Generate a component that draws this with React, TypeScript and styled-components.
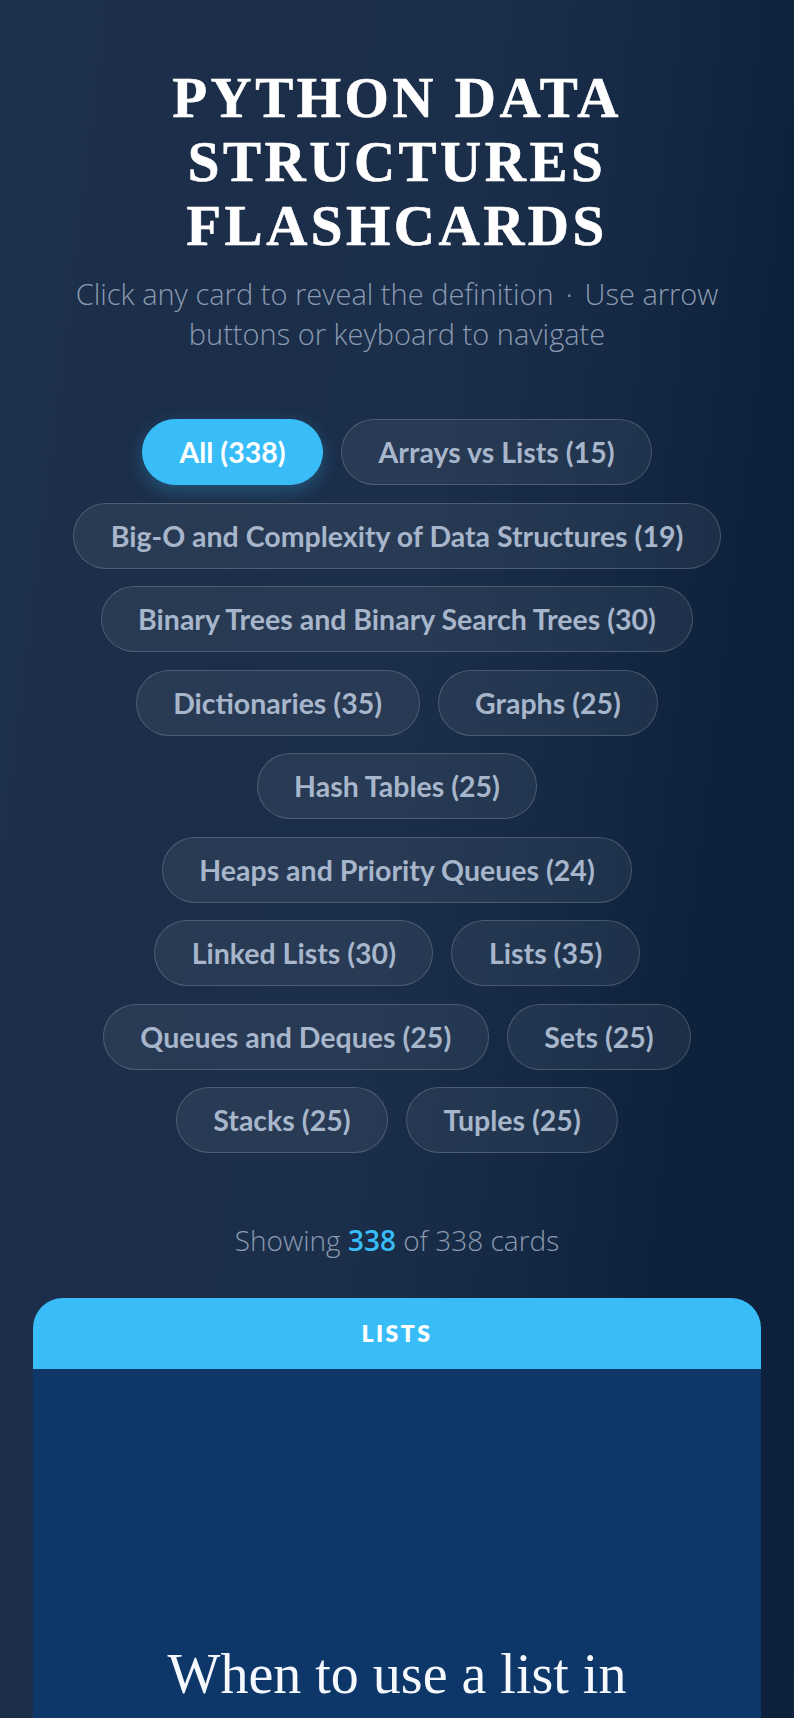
import React, { useState } from "react";
import styled, { createGlobalStyle, css } from "styled-components";

const GlobalStyle = createGlobalStyle`
  html, body {
    margin: 0;
    padding: 0;
  }
  body {
    min-height: 100vh;
    font-family: "Open Sans", "Noto Sans", sans-serif;
    background: linear-gradient(
      97deg,
      #1e3250 0%,
      #1c2e49 15%,
      #1b2e4a 48%,
      #152944 66%,
      #0c203a 84%,
      #0e223e 100%
    ) fixed;
    color: #ffffff;
  }
`;

const Page = styled.main`
  display: flex;
  flex-direction: column;
  align-items: center;
  padding: 66px 33px 0;
  box-sizing: border-box;
  width: 100%;
`;

const Title = styled.h1`
  margin: 0;
  font-family: "Liberation Serif", "Times New Roman", serif;
  font-weight: 700;
  font-size: 57px;
  line-height: 64px;
  letter-spacing: 3.5px;
  -webkit-text-stroke: 0.6px #ffffff;
  color: #ffffff;
  text-align: center;
`;

const Subtitle = styled.p`
  margin: 16px 0 0;
  max-width: 700px;
  font-family: "Open Sans", "Noto Sans", sans-serif;
  font-weight: 300;
  font-size: 29px;
  line-height: 40px;
  color: #8a9ab1;
  text-align: center;
`;

const Dot = styled.span`
  margin: 0 12px;
`;

const FilterBar = styled.nav`
  display: flex;
  flex-wrap: wrap;
  justify-content: center;
  gap: 17.5px 18px;
  margin-top: 65px;
  width: 100%;
`;

const Pill = styled.button<{ $active?: boolean }>`
  box-sizing: border-box;
  height: 66px;
  padding: 0 36.5px;
  border-radius: 33px;
  border: 1.5px solid rgba(255, 255, 255, 0.18);
  background: rgba(255, 255, 255, 0.06);
  font-family: "Lato", "Noto Sans", sans-serif;
  font-weight: 700;
  font-size: 28.5px;
  line-height: 42px;
  color: #a7b6cb;
  cursor: pointer;
  white-space: nowrap;

  ${(p) =>
    p.$active &&
    css`
      background: #38bdf8;
      border-color: #38bdf8;
      color: #ffffff;
      box-shadow: 0 6px 18px rgba(56, 189, 248, 0.28);
    `}
`;

const Count = styled.p`
  margin: 68px 0 0;
  font-family: "Open Sans", "Noto Sans", sans-serif;
  font-weight: 300;
  font-size: 28px;
  line-height: 39px;
  color: #8a9ab1;
  text-align: center;
`;

const CountNumber = styled.strong`
  font-weight: 600;
  color: #38bdf8;
`;

const Card = styled.article`
  margin-top: 38px;
  width: 100%;
  border-radius: 30px 30px 0 0;
  overflow: hidden;
`;

const CardHeader = styled.header`
  background: #38bdf8;
  padding: 20px;
  font-family: "Lato", "Noto Sans", sans-serif;
  font-weight: 800;
  font-size: 23px;
  line-height: 31px;
  letter-spacing: 2.5px;
  color: #ffffff;
  text-align: center;
`;

const CardBody = styled.div`
  background: #0d3769;
  min-height: 680px;
  display: flex;
  align-items: center;
  justify-content: center;
  padding: 0 60px;
`;

const CardText = styled.h2`
  margin: 0;
  font-family: "Liberation Serif", "Times New Roman", serif;
  font-weight: 400;
  font-size: 56px;
  line-height: 70px;
  color: #f5f8fc;
  text-align: center;
`;

const categories: { name: string; count: number }[] = [
  { name: "All", count: 338 },
  { name: "Arrays vs Lists", count: 15 },
  { name: "Big-O and Complexity of Data Structures", count: 19 },
  { name: "Binary Trees and Binary Search Trees", count: 30 },
  { name: "Dictionaries", count: 35 },
  { name: "Graphs", count: 25 },
  { name: "Hash Tables", count: 25 },
  { name: "Heaps and Priority Queues", count: 24 },
  { name: "Linked Lists", count: 30 },
  { name: "Lists", count: 35 },
  { name: "Queues and Deques", count: 25 },
  { name: "Sets", count: 25 },
  { name: "Stacks", count: 25 },
  { name: "Tuples", count: 25 },
];

export default function App() {
  const [active, setActive] = useState("All");
  return (
    <>
      <GlobalStyle />
      <Page>
        <Title>PYTHON DATA STRUCTURES FLASHCARDS</Title>
        <Subtitle>
          Click any card to reveal the definition<Dot>·</Dot>Use arrow buttons
          or keyboard to navigate
        </Subtitle>
        <FilterBar>
          {categories.map((c) => (
            <Pill
              key={c.name}
              $active={active === c.name}
              onClick={() => setActive(c.name)}
            >
              {c.name} ({c.count})
            </Pill>
          ))}
        </FilterBar>
        <Count>
          Showing <CountNumber>338</CountNumber> of 338 cards
        </Count>
        <Card>
          <CardHeader>LISTS</CardHeader>
          <CardBody>
            <CardText>When to use a list in python?</CardText>
          </CardBody>
        </Card>
      </Page>
    </>
  );
}
